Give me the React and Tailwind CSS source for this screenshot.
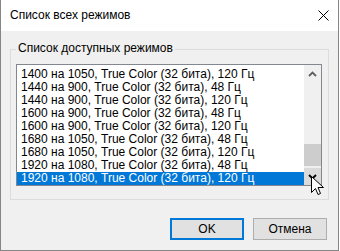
import React from "react";

const modes = [
  "1400 на 1050, True Color (32 бита), 120 Гц",
  "1440 на 900, True Color (32 бита), 48 Гц",
  "1440 на 900, True Color (32 бита), 120 Гц",
  "1600 на 900, True Color (32 бита), 48 Гц",
  "1600 на 900, True Color (32 бита), 120 Гц",
  "1680 на 1050, True Color (32 бита), 48 Гц",
  "1680 на 1050, True Color (32 бита), 120 Гц",
  "1920 на 1080, True Color (32 бита), 48 Гц",
  "1920 на 1080, True Color (32 бита), 120 Гц",
];

const App = () => {
  const selected = modes.length - 1;

  return (
    <div
      className="relative w-[340px] h-[251px] bg-white text-[12px] text-black overflow-hidden"
      style={{ fontFamily: '"Liberation Sans", Arial, sans-serif' }}
    >
      <div className="w-[339px] h-[251px] flex flex-col border-l border-r border-b border-[#858585]">
        {/* ---- Title bar ---- */}
        <div className="h-[31px] bg-white flex items-center justify-between pl-[9px] pr-[9px] shrink-0">
          <span className="leading-[15px]">Список всех режимов</span>
          <svg width="11" height="11" viewBox="0 0 11 11">
            <path d="M0.5 0.5 L10.5 10.5 M10.5 0.5 L0.5 10.5" stroke="#000" strokeWidth="1" />
          </svg>
        </div>

        {/* ---- Body ---- */}
        <div className="flex-1 bg-[#f0f0f0] flex flex-col">
          <div className="relative mt-[18px] ml-[9px] mr-[9px] border border-[#dcdcdc] pt-[14px] pl-[5px] pr-[6px] pb-[13px]">
            <span className="absolute top-[-9px] left-[5px] px-[2px] bg-[#f0f0f0] leading-[15px]">
              Список доступных режимов
            </span>

            {/* ---- List box ---- */}
            <div className="h-[122px] border border-[#828790] bg-white flex">
              <div className="flex-1 flex flex-col justify-end overflow-hidden">
                {modes.map((mode, index) => (
                  <div
                    key={index}
                    className={`h-[13px] shrink-0 leading-[13px] pl-[4px] whitespace-nowrap ${
                      index === selected ? "bg-[#0078d7] text-white" : ""
                    }`}
                  >
                    {mode}
                  </div>
                ))}
              </div>

              {/* ---- Scrollbar ---- */}
              <div className="w-[17px] bg-[#f0f0f0] flex flex-col">
                <div className="h-[17px] flex items-center justify-center">
                  <svg width="9" height="6" viewBox="0 0 9 6">
                    <path d="M1 5 L4.5 1.5 L8 5" stroke="#606060" strokeWidth="1.8" fill="none" />
                  </svg>
                </div>
                <div className="flex-1 flex flex-col justify-end pb-[2px]">
                  <div className="h-[22px] bg-[#cdcdcd]"></div>
                </div>
                <div className="h-[17px] bg-[#dadada] flex items-center justify-center">
                  <svg width="9" height="6" viewBox="0 0 9 6">
                    <path d="M1 1 L4.5 4.5 L8 1" stroke="#000" strokeWidth="1.8" fill="none" />
                  </svg>
                </div>
              </div>
            </div>
          </div>

          {/* ---- Buttons ---- */}
          <div className="mt-[18px] flex justify-end gap-[9px] pr-[11px]">
            <button className="w-[74px] h-[22px] border-2 border-[#0078d7] bg-[#e1e1e1] leading-[18px]">
              OK
            </button>
            <button className="w-[74px] h-[22px] border border-[#adadad] bg-[#e1e1e1] leading-[20px]">
              Отмена
            </button>
          </div>
        </div>
      </div>

      {/* ---- Mouse cursor ---- */}
      <svg className="absolute left-[311px] top-[176px]" width="13" height="21" viewBox="0 0 13 21">
        <path
          d="M0.5 0.5 L0.5 16.5 L4.5 12.5 L7 18.5 L9.5 17.5 L7 11.5 L12.5 11.5 Z"
          fill="#fff"
          stroke="#000"
          strokeWidth="1"
          strokeLinejoin="miter"
        />
      </svg>
    </div>
  );
};

export default App;
